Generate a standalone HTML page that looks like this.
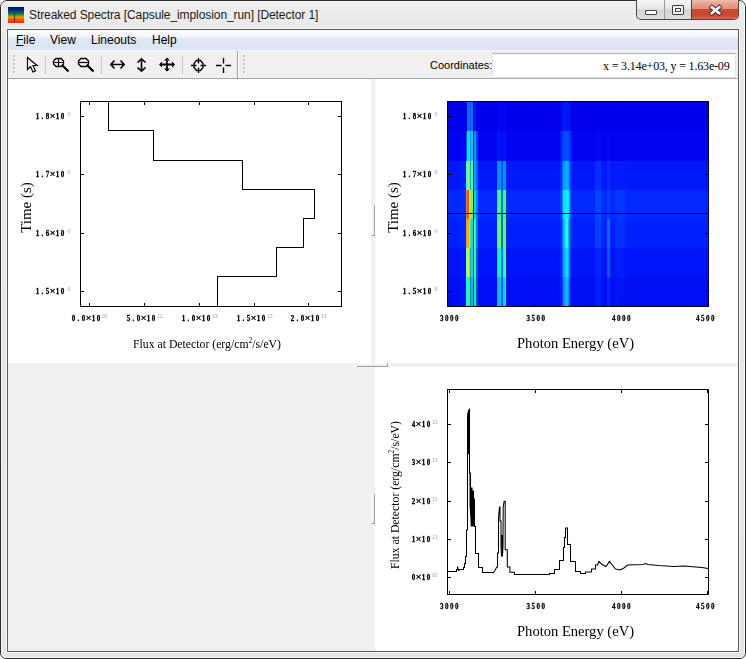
<!DOCTYPE html>
<html><head><meta charset="utf-8"><style>
*{margin:0;padding:0;box-sizing:border-box}
html,body{width:746px;height:659px;overflow:hidden;background:#fff}
svg{will-change:transform}
body{position:relative;font-family:"Liberation Sans",sans-serif}
.abs{position:absolute}
.menu span{position:absolute;top:33px;font-size:12px;color:#000;letter-spacing:0}
.tl{font-family:"Liberation Serif",serif;font-weight:bold;font-size:9px;fill:#000;stroke:#000;stroke-width:0.3px}
.tlx{font-family:"Liberation Sans",sans-serif;font-weight:bold;font-size:9.5px;fill:#000}
.sup{font-family:"Liberation Sans",sans-serif;font-size:5px;fill:#a8a8a8}
.ax{font-family:"Liberation Serif",serif;fill:#000}
</style></head><body>

<div class="abs" style="left:0;top:0;width:746px;height:659px;background:#fff"></div>
<div class="abs" style="left:0;top:0;width:746px;height:659px;border:1px solid #2a2a2a;border-radius:7px 7px 6px 6px;background:linear-gradient(#eeeeee,#e9e9e9 30px,#e4e4e4)"></div>
<div class="abs" style="left:1px;top:1px;width:744px;height:657px;border:1px solid #f8f8f8;border-radius:6px 6px 5px 5px"></div>
<div class="abs" style="left:8px;top:7px;width:16px;height:16px;background:linear-gradient(#000a60 0%,#004080 25%,#208040 45%,#e0a000 62%,#ff5000 80%,#ff2000 100%)"></div>
<div class="abs" style="left:14px;top:13px;width:1px;height:9px;background:#401010;opacity:.7"></div>
<div class="abs" style="left:29px;top:8px;font-size:12px;color:#1a1a1a;white-space:nowrap;letter-spacing:-0.08px">Streaked Spectra [Capsule_implosion_run] [Detector 1]</div>
<div class="abs" style="left:636px;top:0px;width:103px;height:20px;border:1px solid #4a4a4a;border-top:none;border-radius:0 0 5px 5px;background:linear-gradient(#f6f6f6,#e6e6e6 45%,#d4d4d4 55%,#dcdcdc)"></div>
<div class="abs" style="left:664px;top:0px;width:1px;height:19px;background:#9a9a9a"></div>
<div class="abs" style="left:691px;top:0px;width:47px;height:19px;border-left:1px solid #5a3a30;border-radius:0 0 4px 0;background:linear-gradient(#f0c0b0 0%,#e8a090 20%,#e09080 45%,#cc4a2e 50%,#c84a32 80%,#d06a50)"></div>
<div class="abs" style="left:645px;top:10px;width:12px;height:5px;border:1px solid #444;border-radius:1px;background:#fff"></div>
<div class="abs" style="left:672px;top:5px;width:12px;height:10px;border:1px solid #3a3a3a;border-radius:1px;background:#fff"></div>
<div class="abs" style="left:675px;top:8px;width:6px;height:4px;border:1px solid #444;background:#f4f4f4"></div>
<svg class="abs" style="left:691px;top:0" width="47" height="20"><path d="M20.8 7.3 L28.2 13.2 M28.2 7.3 L20.8 13.2" stroke="#3c2c2c" stroke-width="4.4" stroke-linecap="square"/><path d="M20.8 7.3 L28.2 13.2 M28.2 7.3 L20.8 13.2" stroke="#fff" stroke-width="2.6" stroke-linecap="square"/></svg>
<div class="abs" style="left:6px;top:28px;width:734px;height:625px;border:1px solid #f8f8f8"></div>
<div class="abs" style="left:7px;top:29px;width:732px;height:623px;border:1px solid #5a5a5a;background:#f0f0f0"></div>
<div class="abs" style="left:8px;top:30px;width:730px;height:20px;background:linear-gradient(#fdfdff 0%,#f3f5fb 35%,#dfe6f3 45%,#dce3f3 100%)"></div>
<div class="abs" style="left:8px;top:50px;width:730px;height:1px;background:#f4f6fa"></div>
<div class="menu">
<span style="left:16px"><u>F</u>ile</span><span style="left:50px">View</span><span style="left:91px">Lineouts</span><span style="left:152px">Help</span>
</div>
<div class="abs" style="left:8px;top:51px;width:730px;height:27px;background:#f0f0f0"></div>
<div class="abs" style="left:8px;top:78px;width:730px;height:1px;background:#a8a8a8"></div>
<div class="abs" style="left:237px;top:51px;width:1px;height:27px;background:#a0a0a0"></div>
<div class="abs" style="left:238px;top:51px;width:1px;height:27px;background:#fff"></div>
<div class="abs" style="left:13px;top:55px;width:2px;height:2px;background:#c4c4c4;box-shadow:1px 1px 0 #fafafa"></div>
<div class="abs" style="left:13px;top:59px;width:2px;height:2px;background:#c4c4c4;box-shadow:1px 1px 0 #fafafa"></div>
<div class="abs" style="left:13px;top:63px;width:2px;height:2px;background:#c4c4c4;box-shadow:1px 1px 0 #fafafa"></div>
<div class="abs" style="left:13px;top:67px;width:2px;height:2px;background:#c4c4c4;box-shadow:1px 1px 0 #fafafa"></div>
<div class="abs" style="left:13px;top:71px;width:2px;height:2px;background:#c4c4c4;box-shadow:1px 1px 0 #fafafa"></div>
<div class="abs" style="left:243px;top:55px;width:2px;height:2px;background:#c4c4c4;box-shadow:1px 1px 0 #fafafa"></div>
<div class="abs" style="left:243px;top:59px;width:2px;height:2px;background:#c4c4c4;box-shadow:1px 1px 0 #fafafa"></div>
<div class="abs" style="left:243px;top:63px;width:2px;height:2px;background:#c4c4c4;box-shadow:1px 1px 0 #fafafa"></div>
<div class="abs" style="left:243px;top:67px;width:2px;height:2px;background:#c4c4c4;box-shadow:1px 1px 0 #fafafa"></div>
<div class="abs" style="left:243px;top:71px;width:2px;height:2px;background:#c4c4c4;box-shadow:1px 1px 0 #fafafa"></div>
<div class="abs" style="left:45px;top:56px;width:1px;height:18px;background:#c8c8c8"></div>
<div class="abs" style="left:101px;top:56px;width:1px;height:18px;background:#c8c8c8"></div>
<div class="abs" style="left:182px;top:56px;width:1px;height:18px;background:#c8c8c8"></div>
<svg class="abs" style="left:0;top:0" width="250" height="80">
<path d="M27.5 57.5 L27.5 69.5 L30.5 66.5 L33 72 L35.5 71 L33 65.5 L37 65.5 Z" fill="#fff" stroke="#000" stroke-width="1.2" stroke-linejoin="miter"/>
<g stroke="#000" fill="none">
<path d="M56 58.5 L61 58.5 L63.5 61 L63.5 64 L61 66.5 L56 66.5 L53.5 64 L53.5 61 Z" stroke-width="1.3"/>
<path d="M58.5 58.5 V66.5 M53.5 62.5 H63.5" stroke-width="1.2"/>
<path d="M62 65 L68.5 71.5" stroke-width="2.2"/>
<path d="M81 58.5 L86 58.5 L88.5 61 L88.5 64 L86 66.5 L81 66.5 L78.5 64 L78.5 61 Z" stroke-width="1.3"/>
<path d="M78.5 62.5 H88.5" stroke-width="1.2"/>
<path d="M87 65 L93.5 71.5" stroke-width="2.2"/>
<path d="M111 64.5 H124 M114.5 60.5 L110.8 64.5 L114.5 68.5 M120.5 60.5 L124.2 64.5 L120.5 68.5" stroke-width="1.6"/>
<path d="M141.5 59.5 V70 M137.5 62.5 L141.5 58.8 L145.5 62.5 M137.5 67.5 L141.5 71.2 L145.5 67.5" stroke-width="1.6"/>
<path d="M160 64.5 H174 M167 58.5 V71" stroke-width="1.8"/>
</g>
<path d="M159 64.5 L162 61.5 V67.5 Z M175 64.5 L172 61.5 V67.5 Z M167 57.5 L164 60.5 H170 Z M167 71.5 L164 68.5 H170 Z" fill="#000"/>
<g stroke="#000" fill="none" stroke-width="1.3">
<path d="M196.5 60.5 L200.5 60.5 L203 63.5 L203 67.5 L200.5 70.5 L196.5 70.5 L194 67.5 L194 63.5 Z"/>
<path d="M198.5 58 V63.5 M198.5 67.5 V73 M191 65.5 H196.5 M200.5 65.5 H206" stroke-width="1.3"/>
<path d="M223.5 58 V63.5 M223.5 67.5 V73 M216 65.5 H221.5 M225.5 65.5 H231" stroke-width="1.4"/>
</g>
</svg>
<div class="abs" style="left:430px;top:59px;font-size:11px;color:#000;white-space:nowrap">Coordinates:</div>
<div class="abs" style="left:492px;top:53px;width:244px;height:25px;background:#fff;border:1px solid #e2e3ea;border-top-color:#abadb3"></div>
<div class="abs" style="left:603px;top:59px;font-family:'Liberation Serif',serif;font-size:12px;color:#000;white-space:nowrap;letter-spacing:-0.17px">x = 3.14e+03, y = 1.63e-09</div>
<div class="abs" style="left:8px;top:79px;width:730px;height:572px;background:#f0f0f0"></div>
<div class="abs" style="left:8px;top:79px;width:363px;height:284px;background:#fff"></div>
<div class="abs" style="left:375px;top:79px;width:363px;height:284px;background:#fff"></div>
<div class="abs" style="left:375px;top:367px;width:363px;height:284px;background:#fff"></div>
<div class="abs" style="left:371px;top:205px;width:4px;height:31px;border-left:1px solid #fff;border-right:1px solid #a0a0a0;border-bottom:1px solid #a0a0a0"></div>
<div class="abs" style="left:371px;top:494px;width:4px;height:30px;border-left:1px solid #fff;border-right:1px solid #a0a0a0;border-bottom:1px solid #a0a0a0"></div>
<div class="abs" style="left:357px;top:363px;width:31px;height:4px;border-top:1px solid #fff;border-right:1px solid #a0a0a0;border-bottom:1px solid #a0a0a0"></div>
<svg class="abs" style="left:0;top:0" width="746" height="659" shape-rendering="crispEdges">
<rect x="80.5" y="101.5" width="261" height="205" fill="none" stroke="#000"/>
<polyline fill="none" stroke="#000" points="108.5,101.5 108.5,130.5 153.5,130.5 153.5,160.5 242.5,160.5 242.5,189.5 314.5,189.5 314.5,218.5 303.5,218.5 303.5,247.5 276.5,247.5 276.5,276.5 217.5,276.5 217.5,306.5"/>
<rect x="448" y="102" width="260" height="29" fill="#0000ee"/>
<rect x="448" y="131" width="260" height="30" fill="#0004f2"/>
<rect x="448" y="161" width="260" height="29" fill="#0018fa"/>
<rect x="448" y="190" width="260" height="29" fill="#0028ff"/>
<rect x="448" y="219" width="260" height="29" fill="#0020ff"/>
<rect x="448" y="248" width="260" height="29" fill="#0014fa"/>
<rect x="448" y="277" width="260" height="30" fill="#000ef6"/>
<rect x="460" y="102" width="6" height="29" fill="#0000ee"/>
<rect x="460" y="131" width="6" height="30" fill="#0006f3"/>
<rect x="460" y="161" width="6" height="29" fill="#001efb"/>
<rect x="460" y="190" width="6" height="29" fill="#002eff"/>
<rect x="460" y="219" width="6" height="29" fill="#0026ff"/>
<rect x="460" y="248" width="6" height="29" fill="#0018fb"/>
<rect x="460" y="277" width="6" height="29" fill="#0012f8"/>
<rect x="466" y="102" width="1" height="29" fill="#0000ee"/>
<rect x="466" y="131" width="1" height="30" fill="#0060ff"/>
<rect x="466" y="161" width="1" height="29" fill="#40ff90"/>
<rect x="466" y="190" width="1" height="29" fill="#ff8000"/>
<rect x="466" y="219" width="1" height="29" fill="#ffa000"/>
<rect x="466" y="248" width="1" height="29" fill="#90ff60"/>
<rect x="466" y="277" width="1" height="29" fill="#20ffb0"/>
<rect x="467" y="102" width="2" height="29" fill="#0070ff"/>
<rect x="467" y="131" width="2" height="30" fill="#00f0ff"/>
<rect x="467" y="161" width="2" height="29" fill="#a0ff40"/>
<rect x="467" y="190" width="2" height="29" fill="#ff5000"/>
<rect x="467" y="219" width="2" height="29" fill="#ffb000"/>
<rect x="467" y="248" width="2" height="29" fill="#e0ff20"/>
<rect x="467" y="277" width="2" height="29" fill="#30ff90"/>
<rect x="469" y="102" width="1" height="29" fill="#0070ff"/>
<rect x="469" y="131" width="1" height="30" fill="#00e8ff"/>
<rect x="469" y="161" width="1" height="29" fill="#60ff80"/>
<rect x="469" y="190" width="1" height="29" fill="#d0ff30"/>
<rect x="469" y="219" width="1" height="29" fill="#60ff80"/>
<rect x="469" y="248" width="1" height="29" fill="#50ff80"/>
<rect x="469" y="277" width="1" height="29" fill="#00f0ff"/>
<rect x="470" y="102" width="1" height="29" fill="#0060ff"/>
<rect x="470" y="131" width="1" height="30" fill="#0090ff"/>
<rect x="470" y="161" width="1" height="29" fill="#00b0ff"/>
<rect x="470" y="190" width="1" height="29" fill="#80ff60"/>
<rect x="470" y="219" width="1" height="29" fill="#00ffc0"/>
<rect x="470" y="248" width="1" height="29" fill="#00b0ff"/>
<rect x="470" y="277" width="1" height="29" fill="#0080ff"/>
<rect x="471" y="102" width="2" height="29" fill="#0070ff"/>
<rect x="471" y="131" width="2" height="30" fill="#00d0ff"/>
<rect x="471" y="161" width="2" height="29" fill="#40ffb0"/>
<rect x="471" y="190" width="2" height="29" fill="#60ff60"/>
<rect x="471" y="219" width="2" height="29" fill="#00d8ff"/>
<rect x="471" y="248" width="2" height="29" fill="#00e0ff"/>
<rect x="471" y="277" width="2" height="29" fill="#00c0ff"/>
<rect x="474" y="102" width="2" height="29" fill="#0010f6"/>
<rect x="474" y="131" width="2" height="30" fill="#0090ff"/>
<rect x="474" y="161" width="2" height="29" fill="#00a0ff"/>
<rect x="474" y="190" width="2" height="29" fill="#00d0ff"/>
<rect x="474" y="219" width="2" height="29" fill="#40ff90"/>
<rect x="474" y="248" width="2" height="29" fill="#30ff90"/>
<rect x="474" y="277" width="2" height="29" fill="#00ff80"/>
<rect x="476" y="102" width="2" height="29" fill="#0002f0"/>
<rect x="476" y="131" width="2" height="30" fill="#0040ff"/>
<rect x="476" y="161" width="2" height="29" fill="#0060ff"/>
<rect x="476" y="190" width="2" height="29" fill="#0080ff"/>
<rect x="476" y="219" width="2" height="29" fill="#0070ff"/>
<rect x="476" y="248" width="2" height="29" fill="#0050ff"/>
<rect x="476" y="277" width="2" height="29" fill="#0040ff"/>
<rect x="497" y="102" width="4" height="29" fill="#0004f2"/>
<rect x="497" y="131" width="4" height="30" fill="#0014f8"/>
<rect x="497" y="161" width="4" height="29" fill="#0090ff"/>
<rect x="497" y="190" width="4" height="29" fill="#40ff80"/>
<rect x="497" y="219" width="4" height="29" fill="#60ff60"/>
<rect x="497" y="248" width="4" height="29" fill="#00ffc0"/>
<rect x="497" y="277" width="4" height="29" fill="#00c0ff"/>
<rect x="501" y="102" width="2" height="29" fill="#0004f2"/>
<rect x="501" y="131" width="2" height="30" fill="#0008f6"/>
<rect x="501" y="161" width="2" height="29" fill="#0050ff"/>
<rect x="501" y="190" width="2" height="29" fill="#0070ff"/>
<rect x="501" y="219" width="2" height="29" fill="#0070ff"/>
<rect x="501" y="248" width="2" height="29" fill="#0060ff"/>
<rect x="501" y="277" width="2" height="29" fill="#0050ff"/>
<rect x="503" y="102" width="3" height="29" fill="#0004f2"/>
<rect x="503" y="131" width="3" height="30" fill="#0014f8"/>
<rect x="503" y="161" width="3" height="29" fill="#0090ff"/>
<rect x="503" y="190" width="3" height="29" fill="#40ff60"/>
<rect x="503" y="219" width="3" height="29" fill="#60ff40"/>
<rect x="503" y="248" width="3" height="29" fill="#40ff80"/>
<rect x="503" y="277" width="3" height="29" fill="#00e0ff"/>
<rect x="560" y="102" width="12" height="29" fill="#0008f0"/>
<rect x="560" y="131" width="12" height="30" fill="#0020fc"/>
<rect x="560" y="161" width="12" height="29" fill="#0030ff"/>
<rect x="560" y="190" width="12" height="29" fill="#0040ff"/>
<rect x="560" y="219" width="12" height="29" fill="#0034ff"/>
<rect x="560" y="248" width="12" height="29" fill="#0024fc"/>
<rect x="560" y="277" width="12" height="29" fill="#0018fa"/>
<rect x="562" y="102" width="8" height="29" fill="#0018f8"/>
<rect x="562" y="131" width="8" height="30" fill="#0040ff"/>
<rect x="562" y="161" width="8" height="29" fill="#0070ff"/>
<rect x="562" y="190" width="8" height="29" fill="#0090ff"/>
<rect x="562" y="219" width="8" height="29" fill="#0070ff"/>
<rect x="562" y="248" width="8" height="29" fill="#0060ff"/>
<rect x="562" y="277" width="8" height="29" fill="#0040ff"/>
<rect x="563" y="102" width="6" height="29" fill="#0018f8"/>
<rect x="563" y="131" width="6" height="30" fill="#0048ff"/>
<rect x="563" y="161" width="6" height="29" fill="#00a0ff"/>
<rect x="563" y="190" width="6" height="29" fill="#00e8ff"/>
<rect x="563" y="219" width="6" height="29" fill="#00c0ff"/>
<rect x="563" y="248" width="6" height="29" fill="#00b0ff"/>
<rect x="563" y="277" width="6" height="29" fill="#0090ff"/>
<rect x="565" y="102" width="3" height="29" fill="#0018f8"/>
<rect x="565" y="131" width="3" height="30" fill="#0050ff"/>
<rect x="565" y="161" width="3" height="29" fill="#00b0ff"/>
<rect x="565" y="190" width="3" height="29" fill="#00f0ff"/>
<rect x="565" y="219" width="3" height="29" fill="#20ffd0"/>
<rect x="565" y="248" width="3" height="29" fill="#00e0ff"/>
<rect x="565" y="277" width="3" height="29" fill="#00c0ff"/>
<rect x="595" y="102" width="6" height="29" fill="#0000ee"/>
<rect x="595" y="131" width="6" height="30" fill="#0008f4"/>
<rect x="595" y="161" width="6" height="29" fill="#0030ff"/>
<rect x="595" y="190" width="6" height="29" fill="#0048ff"/>
<rect x="595" y="219" width="6" height="29" fill="#0040ff"/>
<rect x="595" y="248" width="6" height="29" fill="#0028fc"/>
<rect x="595" y="277" width="6" height="29" fill="#0020fa"/>
<rect x="607" y="102" width="3" height="29" fill="#0000ee"/>
<rect x="607" y="131" width="3" height="30" fill="#0008f4"/>
<rect x="607" y="161" width="3" height="29" fill="#0028ff"/>
<rect x="607" y="190" width="3" height="29" fill="#0040ff"/>
<rect x="607" y="219" width="3" height="29" fill="#0070ff"/>
<rect x="607" y="248" width="3" height="29" fill="#0060ff"/>
<rect x="607" y="277" width="3" height="29" fill="#0028fc"/>
<rect x="615" y="102" width="10" height="29" fill="#0000ee"/>
<rect x="615" y="131" width="10" height="30" fill="#0004f2"/>
<rect x="615" y="161" width="10" height="29" fill="#001cfc"/>
<rect x="615" y="190" width="10" height="29" fill="#0038ff"/>
<rect x="615" y="219" width="10" height="29" fill="#0030ff"/>
<rect x="615" y="248" width="10" height="29" fill="#001cfc"/>
<rect x="615" y="277" width="10" height="29" fill="#0014f8"/>
<rect x="447.5" y="101.5" width="261" height="205" fill="none" stroke="#000"/>
<path d="M473.5 102 V306 M448 213.5 H708" stroke="#000"/>
<rect x="447.5" y="389.5" width="261" height="205" fill="none" stroke="#000"/>
<path stroke="#000" d="M81 116.5 h3 M341 116.5 h-3 M81 174.5 h3 M341 174.5 h-3 M81 233.5 h3 M341 233.5 h-3 M81 291.5 h3 M341 291.5 h-3 M89.5 102 v3 M89.5 306 v-3 M144.5 102 v3 M144.5 306 v-3 M199.5 102 v3 M199.5 306 v-3 M254.5 102 v3 M254.5 306 v-3 M308.5 102 v3 M308.5 306 v-3 M448 116.5 h3 M708 116.5 h-3 M448 174.5 h3 M708 174.5 h-3 M448 233.5 h3 M708 233.5 h-3 M448 291.5 h3 M708 291.5 h-3 M449.5 102 v3 M449.5 306 v-3 M535.5 102 v3 M535.5 306 v-3 M621.5 102 v3 M621.5 306 v-3 M707.5 102 v3 M707.5 306 v-3 M448 424.5 h3 M708 424.5 h-3 M448 462.5 h3 M708 462.5 h-3 M448 501.5 h3 M708 501.5 h-3 M448 539.5 h3 M708 539.5 h-3 M448 577.5 h3 M708 577.5 h-3 M449.5 390 v3 M449.5 594 v-3 M535.5 390 v3 M535.5 594 v-3 M621.5 390 v3 M621.5 594 v-3 M707.5 390 v3 M707.5 594 v-3"/>
</svg>
<svg class="abs" style="left:0;top:0" width="746" height="659">
<polyline fill="none" stroke="#000" stroke-width="1.05" stroke-linejoin="miter" points="447.5,571.5 456.5,571.5 456.5,569.5 457.5,569.5 457.5,566.5 458.5,570.5 460,569.5 463.5,569.5 463.5,567.5 464.5,567.5 464.5,563.5 465.5,563.5 465.5,556.5 466.5,556.5 466.5,530 467.5,530 467.5,417 468.5,411 469.5,409.5 469.5,473 470.5,473 470.5,488 472,488 472,491 473.5,491 473.5,499 474.5,499 474.5,526.5 475.5,526.5 475.5,553.5 478.5,553.5 478.5,567.5 482.5,567.5 482.5,572.5 493.5,572.5 495,570.5 496.5,567.5 497.5,567 497.5,553 498.5,553 498.5,518 499.5,507 500,507 500,521 501,521 501,546.5 501.5,556 502.5,556 503,546 503.2,507 504.1,501.2 505.2,501.2 505.2,549.7 507.3,549.7 507.3,567 509.9,567 509.9,572.2 514.4,572.2 514.4,574.5 549.5,574.5 549.5,573.5 554.5,573.5 554.5,569.5 559.5,569.5 559.5,560.5 563.5,560.5 563.5,547.5 564.5,547.5 564.5,537.5 565.5,537.5 565.5,528 567.5,528 567.5,544.5 570.5,544.5 570.5,561.5 575.5,561.5 575.5,571.5 580.5,571.5 580.5,573.5 585.5,573.5 585.5,572 591.5,572 591.5,569 595.5,569 595.5,565 597.5,565 599,561.5 602,564.5 606,566.5 609.5,561.5 615.5,569 620,570 624,568 627.5,565 643,564.5 645.5,563.5 648,564.5 658.5,565.5 674,566.5 684,566 702,567.5 708,568.5"/>
<polygon fill="#000" points="467,417 468,411 469,409 470,409 470,454 467,454"/>
<polygon fill="#000" points="469.5,473 470.5,473 470.5,488 472,488 472,491 473.5,491 473.5,499 474.8,499 474.8,526.5 470.8,526.5 470.2,515 469.5,505"/>
<polygon fill="#000" points="501,535 503,535 503,556 501.5,556"/>
</svg>
<svg class="abs" style="left:0;top:0" width="746" height="659">
<text class="tl" transform="translate(35,119) scale(0.78,1)" x="3.21 9.62 16.03 28.85 35.26" y="0" text-anchor="middle">1.810</text>
<text class="tlx" x="52.5" y="118.7" text-anchor="middle">×</text>
<text class="sup" x="66" y="116">-9</text>
<text class="tl" transform="translate(35,177) scale(0.78,1)" x="3.21 9.62 16.03 28.85 35.26" y="0" text-anchor="middle">1.710</text>
<text class="tlx" x="52.5" y="176.7" text-anchor="middle">×</text>
<text class="sup" x="66" y="174">-9</text>
<text class="tl" transform="translate(35,236) scale(0.78,1)" x="3.21 9.62 16.03 28.85 35.26" y="0" text-anchor="middle">1.610</text>
<text class="tlx" x="52.5" y="235.7" text-anchor="middle">×</text>
<text class="sup" x="66" y="233">-9</text>
<text class="tl" transform="translate(35,294) scale(0.78,1)" x="3.21 9.62 16.03 28.85 35.26" y="0" text-anchor="middle">1.510</text>
<text class="tlx" x="52.5" y="293.7" text-anchor="middle">×</text>
<text class="sup" x="66" y="291">-9</text>
<text class="tl" transform="translate(71,321) scale(0.78,1)" x="3.21 9.62 16.03 28.85 35.26" y="0" text-anchor="middle">0.010</text>
<text class="tlx" x="88.5" y="320.7" text-anchor="middle">×</text>
<text class="sup" x="102" y="318">00</text>
<text class="tl" transform="translate(126,321) scale(0.78,1)" x="3.21 9.62 16.03 28.85 35.26" y="0" text-anchor="middle">5.010</text>
<text class="tlx" x="143.5" y="320.7" text-anchor="middle">×</text>
<text class="sup" x="157" y="318">12</text>
<text class="tl" transform="translate(181,321) scale(0.78,1)" x="3.21 9.62 16.03 28.85 35.26" y="0" text-anchor="middle">1.010</text>
<text class="tlx" x="198.5" y="320.7" text-anchor="middle">×</text>
<text class="sup" x="212" y="318">13</text>
<text class="tl" transform="translate(236,321) scale(0.78,1)" x="3.21 9.62 16.03 28.85 35.26" y="0" text-anchor="middle">1.510</text>
<text class="tlx" x="253.5" y="320.7" text-anchor="middle">×</text>
<text class="sup" x="267" y="318">13</text>
<text class="tl" transform="translate(290,321) scale(0.78,1)" x="3.21 9.62 16.03 28.85 35.26" y="0" text-anchor="middle">2.010</text>
<text class="tlx" x="307.5" y="320.7" text-anchor="middle">×</text>
<text class="sup" x="321" y="318">13</text>
<text class="tl" transform="translate(402,119) scale(0.78,1)" x="3.21 9.62 16.03 28.85 35.26" y="0" text-anchor="middle">1.810</text>
<text class="tlx" x="419.5" y="118.7" text-anchor="middle">×</text>
<text class="sup" x="433" y="116">-9</text>
<text class="tl" transform="translate(402,177) scale(0.78,1)" x="3.21 9.62 16.03 28.85 35.26" y="0" text-anchor="middle">1.710</text>
<text class="tlx" x="419.5" y="176.7" text-anchor="middle">×</text>
<text class="sup" x="433" y="174">-9</text>
<text class="tl" transform="translate(402,236) scale(0.78,1)" x="3.21 9.62 16.03 28.85 35.26" y="0" text-anchor="middle">1.610</text>
<text class="tlx" x="419.5" y="235.7" text-anchor="middle">×</text>
<text class="sup" x="433" y="233">-9</text>
<text class="tl" transform="translate(402,294) scale(0.78,1)" x="3.21 9.62 16.03 28.85 35.26" y="0" text-anchor="middle">1.510</text>
<text class="tlx" x="419.5" y="293.7" text-anchor="middle">×</text>
<text class="sup" x="433" y="291">-9</text>
<text class="tl" transform="translate(439.2,321) scale(0.78,1)" x="3.21 9.62 16.03 22.44" y="0" text-anchor="middle">3000</text>
<text class="tl" transform="translate(439.2,609) scale(0.78,1)" x="3.21 9.62 16.03 22.44" y="0" text-anchor="middle">3000</text>
<text class="tl" transform="translate(525.7,321) scale(0.78,1)" x="3.21 9.62 16.03 22.44" y="0" text-anchor="middle">3500</text>
<text class="tl" transform="translate(525.7,609) scale(0.78,1)" x="3.21 9.62 16.03 22.44" y="0" text-anchor="middle">3500</text>
<text class="tl" transform="translate(611.2,321) scale(0.78,1)" x="3.21 9.62 16.03 22.44" y="0" text-anchor="middle">4000</text>
<text class="tl" transform="translate(611.2,609) scale(0.78,1)" x="3.21 9.62 16.03 22.44" y="0" text-anchor="middle">4000</text>
<text class="tl" transform="translate(695.2,321) scale(0.78,1)" x="3.21 9.62 16.03 22.44" y="0" text-anchor="middle">4500</text>
<text class="tl" transform="translate(695.2,609) scale(0.78,1)" x="3.21 9.62 16.03 22.44" y="0" text-anchor="middle">4500</text>
<text class="tl" transform="translate(411,427) scale(0.78,1)" x="3.21 16.03 22.44" y="0" text-anchor="middle">410</text>
<text class="tlx" x="418.5" y="426.7" text-anchor="middle">×</text>
<text class="sup" x="432" y="424">13</text>
<text class="tl" transform="translate(411,465) scale(0.78,1)" x="3.21 16.03 22.44" y="0" text-anchor="middle">310</text>
<text class="tlx" x="418.5" y="464.7" text-anchor="middle">×</text>
<text class="sup" x="432" y="462">13</text>
<text class="tl" transform="translate(411,504) scale(0.78,1)" x="3.21 16.03 22.44" y="0" text-anchor="middle">210</text>
<text class="tlx" x="418.5" y="503.7" text-anchor="middle">×</text>
<text class="sup" x="432" y="501">13</text>
<text class="tl" transform="translate(411,542) scale(0.78,1)" x="3.21 16.03 22.44" y="0" text-anchor="middle">110</text>
<text class="tlx" x="418.5" y="541.7" text-anchor="middle">×</text>
<text class="sup" x="432" y="539">13</text>
<text class="tl" transform="translate(411,580) scale(0.78,1)" x="3.21 16.03 22.44" y="0" text-anchor="middle">010</text>
<text class="tlx" x="418.5" y="579.7" text-anchor="middle">×</text>
<text class="sup" x="432" y="577">00</text>
<text class="ax" x="207" y="348" font-size="12.5" text-anchor="middle" textLength="148" lengthAdjust="spacingAndGlyphs">Flux at Detector (erg/cm<tspan font-size="8" dy="-5">2</tspan><tspan dy="5">/s/eV)</tspan></text>
<text class="ax" x="0" y="0" font-size="15" text-anchor="middle" transform="translate(31,207.5) rotate(-90)">Time (s)</text>
<text class="ax" x="0" y="0" font-size="15" text-anchor="middle" transform="translate(398,207.5) rotate(-90)">Time (s)</text>
<text class="ax" x="575.5" y="348" font-size="15" text-anchor="middle" textLength="117" lengthAdjust="spacingAndGlyphs">Photon Energy (eV)</text>
<text class="ax" x="575.5" y="636" font-size="15" text-anchor="middle" textLength="117" lengthAdjust="spacingAndGlyphs">Photon Energy (eV)</text>
<text class="ax" x="0" y="0" font-size="12.5" text-anchor="middle" textLength="148" lengthAdjust="spacingAndGlyphs" transform="translate(399,495) rotate(-90)">Flux at Detector (erg/cm<tspan font-size="8" dy="-5">2</tspan><tspan dy="5">/s/eV)</tspan></text>
</svg>
</body></html>
